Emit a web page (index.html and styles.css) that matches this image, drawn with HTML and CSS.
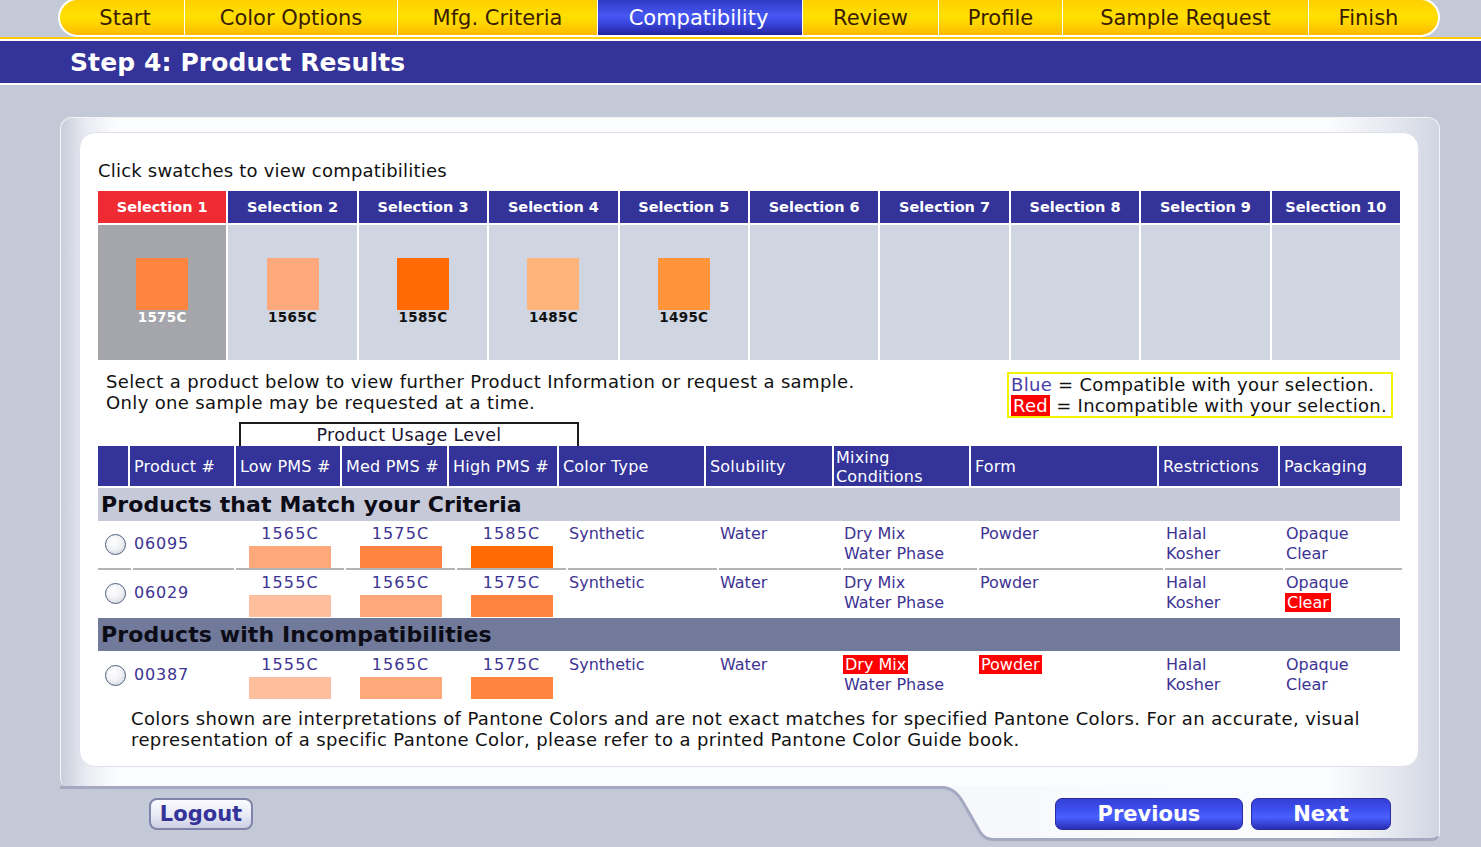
FILE: index.html
```html
<!DOCTYPE html>
<html lang="en">
<head>
<meta charset="utf-8">
<title>Step 4: Product Results</title>
<link rel="stylesheet" href="styles.css">
</head>
<body>
<nav class="steps">
  <a class="step step-start">Start</a>
  <a class="step step-color">Color Options</a>
  <a class="step step-mfg">Mfg. Criteria</a>
  <a class="step step-compat active">Compatibility</a>
  <a class="step step-review">Review</a>
  <a class="step step-profile">Profile</a>
  <a class="step step-sample">Sample Request</a>
  <a class="step step-finish">Finish</a>
</nav>
<div class="topline"></div>
<header class="banner"><h1>Step 4: Product Results</h1></header>

<main class="frame">
  <div class="frame-top">
    <section class="panel">
      <p class="intro">Click swatches to view compatibilities</p>

      <div class="selections">
        <div class="sel-head selected">Selection 1</div>
        <div class="sel-head">Selection 2</div>
        <div class="sel-head">Selection 3</div>
        <div class="sel-head">Selection 4</div>
        <div class="sel-head">Selection 5</div>
        <div class="sel-head">Selection 6</div>
        <div class="sel-head">Selection 7</div>
        <div class="sel-head">Selection 8</div>
        <div class="sel-head">Selection 9</div>
        <div class="sel-head">Selection 10</div>

        <div class="sel-body selected"><span class="chip c1575"></span><span class="chip-label">1575C</span></div>
        <div class="sel-body"><span class="chip c1565"></span><span class="chip-label">1565C</span></div>
        <div class="sel-body"><span class="chip c1585"></span><span class="chip-label">1585C</span></div>
        <div class="sel-body"><span class="chip c1485"></span><span class="chip-label">1485C</span></div>
        <div class="sel-body"><span class="chip c1495"></span><span class="chip-label">1495C</span></div>
        <div class="sel-body"></div>
        <div class="sel-body"></div>
        <div class="sel-body"></div>
        <div class="sel-body"></div>
        <div class="sel-body"></div>
      </div>

      <div class="info-row">
        <p class="info">Select a product below to view further Product Information or request a sample.<br>Only one sample may be requested at a time.</p>
        <div class="legend">
          <div><span class="blue">Blue</span> = Compatible with your selection.</div>
          <div><span class="red">Red</span> = Incompatible with your selection.</div>
        </div>
      </div>

      <div class="usage">Product Usage Level</div>

      <div class="thead">
        <div class="th"></div>
        <div class="th">Product #</div>
        <div class="th">Low PMS #</div>
        <div class="th">Med PMS #</div>
        <div class="th">High PMS #</div>
        <div class="th">Color Type</div>
        <div class="th">Solubility</div>
        <div class="th th-two">Mixing<br>Conditions</div>
        <div class="th">Form</div>
        <div class="th">Restrictions</div>
        <div class="th">Packaging</div>
      </div>

      <div class="group group-match">Products that Match your Criteria</div>

      <div class="row row-sep">
        <div class="td td-radio"><input type="radio" name="product"></div>
        <div class="td td-num">06095</div>
        <div class="td td-pms"><span class="pms">1565C</span><span class="bar c1565"></span></div>
        <div class="td td-pms"><span class="pms">1575C</span><span class="bar c1575"></span></div>
        <div class="td td-pms"><span class="pms">1585C</span><span class="bar c1585"></span></div>
        <div class="td">Synthetic</div>
        <div class="td">Water</div>
        <div class="td">Dry Mix<br>Water Phase</div>
        <div class="td">Powder</div>
        <div class="td">Halal<br>Kosher</div>
        <div class="td">Opaque<br>Clear</div>
      </div>

      <div class="row">
        <div class="td td-radio"><input type="radio" name="product"></div>
        <div class="td td-num">06029</div>
        <div class="td td-pms"><span class="pms">1555C</span><span class="bar c1555"></span></div>
        <div class="td td-pms"><span class="pms">1565C</span><span class="bar c1565"></span></div>
        <div class="td td-pms"><span class="pms">1575C</span><span class="bar c1575"></span></div>
        <div class="td">Synthetic</div>
        <div class="td">Water</div>
        <div class="td">Dry Mix<br>Water Phase</div>
        <div class="td">Powder</div>
        <div class="td">Halal<br>Kosher</div>
        <div class="td">Opaque<br><span class="bad">Clear</span></div>
      </div>

      <div class="group group-incompat">Products with Incompatibilities</div>

      <div class="row">
        <div class="td td-radio"><input type="radio" name="product"></div>
        <div class="td td-num">00387</div>
        <div class="td td-pms"><span class="pms">1555C</span><span class="bar c1555"></span></div>
        <div class="td td-pms"><span class="pms">1565C</span><span class="bar c1565"></span></div>
        <div class="td td-pms"><span class="pms">1575C</span><span class="bar c1575"></span></div>
        <div class="td">Synthetic</div>
        <div class="td">Water</div>
        <div class="td"><span class="bad">Dry Mix</span><br>Water Phase</div>
        <div class="td"><span class="bad">Powder</span></div>
        <div class="td">Halal<br>Kosher</div>
        <div class="td">Opaque<br>Clear</div>
      </div>

      <p class="note">Colors shown are interpretations of Pantone Colors and are not exact matches for specified Pantone Colors. For an accurate, visual<br>representation of a specific Pantone Color, please refer to a printed Pantone Color Guide book.</p>
    </section>
  </div>

  <div class="frame-bottom">
    <div class="bottom-left">
      <button class="btn-logout" type="button">Logout</button>
    </div>
    <svg class="join" width="72" height="55" viewBox="0 0 72 55" aria-hidden="true">
      <path d="M0 0 H72 V52 H64 C58 52 54 50 51 45 L35 17 C30 8 24 0 12 0 Z" fill="#f7f8fb"/>
      <path d="M0 1.5 H12 C24 1.5 30 9 35 18 L51 46 C54 51 58 53.5 64 53.5 H72" fill="none" stroke="#a4a8c0" stroke-width="3"/>
    </svg>
    <div class="bottom-right">
      <button class="btn-blue btn-prev" type="button">Previous</button>
      <button class="btn-blue btn-next" type="button">Next</button>
    </div>
  </div>
</main>
</body>
</html>
```

FILE: styles.css
```css
* { box-sizing: border-box; }

html, body {
  margin: 0;
  padding: 0;
}

body {
  background: #c4c9d7;
  font-family: "DejaVu Sans", "Noto Sans", sans-serif;
  color: #111;
  width: 1481px;
  height: 847px;
  overflow: hidden;
}

/* ---------- step navigation ---------- */
.steps {
  display: flex;
  margin: -2px 0 0 58px;
  width: 1382px;
  height: 39px;
  border: 2px solid #fff;
  border-radius: 20px;
  overflow: hidden;
  background: linear-gradient(#ffcf00 0%, #ffe000 45%, #ffd300 70%, #ffb800 100%);
}

.step {
  display: flex;
  align-items: center;
  justify-content: center;
  font-size: 21px;
  color: #3a1c02;
  border-right: 1px solid #fff;
  white-space: nowrap;
  padding-top: 1px;
}

.step:last-child { border-right: none; }

.step-start   { width: 125px; padding-left: 6px; }
.step-color   { width: 213px; }
.step-mfg     { width: 200px; }
.step-compat  { width: 205px; padding-right: 3px; }
.step-review  { width: 136px; }
.step-profile { width: 124px; }
.step-sample  { width: 246px; }
.step-finish  { flex: 1; padding-right: 10px; }

.step.active {
  color: #fff;
  background: linear-gradient(#2f3bc4 0%, #4657f2 45%, #3a48e0 65%, #23239c 100%);
}

.topline {
  height: 4px;
  border-top: 2px solid #ffcc00;
  background: #fff;
}

.banner {
  height: 44px;
  background: #333399;
  border-bottom: 2px solid #fff;
  display: flex;
  align-items: center;
  padding-left: 70px;
}

.banner h1 {
  margin: 0;
  font-size: 25px;
  font-weight: bold;
  color: #fff;
  letter-spacing: 0.1px;
}

/* ---------- frame ---------- */
.frame {
  margin: 32px 0 0 60px;
  width: 1380px;
}

.frame-top {
  padding: 14px 20px 19px 18px;
  border: 1px solid #f3f4f8;
  border-bottom: none;
  border-radius: 12px 12px 0 8px;
  background: linear-gradient(to right, #c8cddb 0px, #e9ebf2 25px, #fbfcfd 55px, #fbfcfd calc(100% - 110px), #e4e7ef calc(100% - 45px), #d1d5e1 100%);
}

.panel {
  background: #fff;
  border: 1px solid #dde0ea;
  border-radius: 16px;
  padding: 27px 18px 16px 18px;
}

.intro {
  margin: 0 0 9px 0;
  font-size: 18px;
  line-height: 22px;
  letter-spacing: 0.2px;
}

/* ---------- selection swatches ---------- */
.selections {
  display: grid;
  grid-template-columns: repeat(10, 1fr);
  grid-template-rows: 32px 135px;
  gap: 2px;
}

.sel-head {
  background: #333399;
  color: #fff;
  font-weight: bold;
  font-size: 14.5px;
  display: flex;
  align-items: center;
  justify-content: center;
}

.sel-head.selected { background: #ee2b33; }

.sel-body {
  background: #cfd5e1;
  display: flex;
  flex-direction: column;
  align-items: center;
  padding-top: 33px;
}

.sel-body.selected { background: #a5a6ab; }

.chip {
  width: 52px;
  height: 52px;
}

.chip-label {
  font-size: 13.5px;
  font-weight: bold;
  line-height: 16px;
  margin-top: -1px;
  color: #111;
  letter-spacing: 0.3px;
}

.sel-body.selected .chip-label { color: #fff; }

.c1575 { background: #ff843f; }
.c1565 { background: #ffa87b; }
.c1585 { background: #ff6a04; }
.c1485 { background: #ffb47b; }
.c1495 { background: #ff943a; }
.c1555 { background: #ffbf9f; }

/* ---------- info row ---------- */
.info-row {
  display: flex;
  justify-content: space-between;
  align-items: flex-start;
  margin-top: 11px;
  height: 47px;
}

.info {
  margin: 0 0 0 8px;
  font-size: 18px;
  line-height: 21px;
  letter-spacing: 0.35px;
}

.legend {
  margin: 1px 7px 0 0;
  border: 2px solid #f4f400;
  padding: 0 1px 0 2px;
  font-size: 18px;
  line-height: 21px;
  letter-spacing: 0.3px;
  width: 386px;
  white-space: nowrap;
}

.legend .blue { color: #4a3fa6; }
.legend .red { background: #ff0000; color: #fff; padding: 0 2px; }

.usage {
  margin: 4px 0 0 141px;
  width: 340px;
  height: 24px;
  border: 2px solid #1c1c1c;
  border-bottom: none;
  text-align: center;
  font-size: 17.5px;
  line-height: 22px;
  letter-spacing: 0.35px;
  color: #1a1430;
}

/* ---------- product table ---------- */
.thead {
  display: grid;
  grid-template-columns: 30px 104px 104px 105px 108px 145px 126px 135px 186px 119px 122px;
  column-gap: 2px;
  height: 40px;
}

.th {
  background: #333399;
  color: #fff;
  font-size: 16px;
  line-height: 19px;
  letter-spacing: 0.2px;
  display: flex;
  align-items: center;
  padding-left: 4px;
  white-space: nowrap;
}

.th-two { padding-left: 2px; padding-top: 1px; }

.group {
  margin-top: 2px;
  height: 33px;
  font-size: 22px;
  font-weight: bold;
  line-height: 33px;
  letter-spacing: 0.1px;
  padding-left: 3px;
  color: #0c0c16;
}

.group-match { background: #c5c9d8; }
.group-incompat { background: #717a9b; margin-bottom: 1px; }

.row {
  display: grid;
  grid-template-columns: 33px 101px 108px 109px 109px 149px 122px 134px 184px 118px 117px;
  column-gap: 2px;
  height: 46px;
}

.row.row-sep { height: 49px; }
.row.row-sep .td { border-bottom: 2px solid #b3b3b8; }

.td {
  font-size: 16px;
  line-height: 19.5px;
  color: #3d3393;
  padding: 3px 0 0 1px;
  white-space: nowrap;
}

.td-radio {
  display: flex;
  align-items: center;
  justify-content: center;
  padding: 0 0 1px 1px;
}

.td-radio input {
  appearance: none;
  -webkit-appearance: none;
  margin: 0;
  width: 21px;
  height: 21px;
  border-radius: 50%;
  border: 1.5px solid #4d5f7c;
  background: radial-gradient(circle at 40% 35%, #ffffff 0%, #f2f3f6 45%, #c9cdd8 100%);
}

.td-num {
  display: flex;
  align-items: center;
  padding: 0 0 1px 1px;
  letter-spacing: 0.8px;
}

.td-pms {
  display: flex;
  flex-direction: column;
  align-items: center;
  padding-left: 0;
}

.pms {
  letter-spacing: 1.1px;
  line-height: 19px;
}

.bar {
  width: 82px;
  height: 22px;
  margin-top: 3px;
}

.bad {
  background: #ff0000;
  color: #fff;
  padding: 0 2px 0 2px;
  margin-left: -1px;
}

.note {
  margin: 10px 0 0 33px;
  font-size: 18px;
  line-height: 21px;
  letter-spacing: 0.38px;
  white-space: nowrap;
}

/* ---------- bottom bar ---------- */
.frame-bottom {
  display: flex;
  height: 55px;
}

.bottom-left {
  width: 869px;
  border-top: 3px solid #a4a8c0;
  padding: 9px 0 0 89px;
}

.join { flex: none; display: block; }

.bottom-right {
  flex: 1;
  display: flex;
  align-items: flex-start;
  gap: 8px;
  padding: 12px 0 0 54px;
  height: 55px;
  border-bottom: 3px solid #a4a8c0;
  border-right: 1px solid #f3f4f8;
  border-radius: 0 0 8px 0;
  background: linear-gradient(to right, #f7f8fb 0, #fbfcfd 40%, #fbfcfd calc(100% - 110px), #e4e7ef calc(100% - 45px), #d1d5e1 100%);
}

.btn-logout {
  width: 104px;
  height: 32px;
  padding: 0;
  border: 2px solid #7e84aa;
  border-radius: 8px;
  background: linear-gradient(#fafaff 0%, #e9ebf6 50%, #cdd0e4 100%);
  font-family: "DejaVu Sans", sans-serif;
  font-weight: bold;
  font-size: 21px;
  color: #333399;
}

.btn-blue {
  height: 32px;
  padding: 0;
  border: 1px solid #2b2b9e;
  border-radius: 7px;
  background: linear-gradient(#3340d6 0%, #4254f4 45%, #4a60ff 60%, #2a2eb4 100%);
  font-family: "DejaVu Sans", sans-serif;
  font-weight: bold;
  font-size: 21px;
  color: #fff;
}

.btn-prev { width: 188px; }
.btn-next { width: 140px; }
```
